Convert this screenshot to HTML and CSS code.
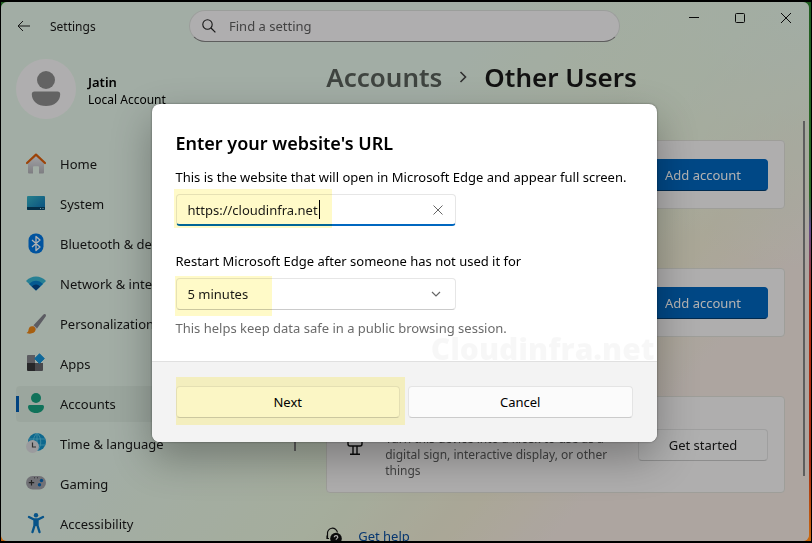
FILE: index.html
```html
<!DOCTYPE html>
<html lang="en">
<head>
    <meta charset="UTF-8">
    <meta name="viewport" content="width=device-width, initial-scale=1.0">
    <title>Settings</title>
    <link rel="stylesheet" href="styles.css">
</head>
<body>

    <div class="window">

        <!-- Title bar -->
        <header class="titlebar">
            <button class="back" aria-label="Back">
                <svg width="14" height="12" viewBox="0 0 14 12"><path d="M13 6H1M6 1L1 6l5 5" fill="none" stroke="#222" stroke-width="1"/></svg>
            </button>
            <span class="app-name">Settings</span>
            <div class="search">
                <svg width="14" height="14" viewBox="0 0 14 14"><circle cx="5.5" cy="5.5" r="4.7" fill="none" stroke="#222" stroke-width="1.1"/><path d="M9 9l4.400 4.400" stroke="#222" stroke-width="1.2"/></svg>
                <input type="text" placeholder="Find a setting" aria-label="Find a setting">
            </div>
            <div class="window-controls">
                <button aria-label="Minimize"><svg width="10" height="10" viewBox="0 0 10 10"><path d="M0 4.500h10" stroke="#111"/></svg></button>
                <button aria-label="Maximize"><svg width="10" height="10" viewBox="0 0 10 10"><rect x=".5" y=".5" width="9" height="9" rx="1" fill="none" stroke="#111"/></svg></button>
                <button aria-label="Close"><svg width="10" height="10" viewBox="0 0 10 10"><path d="M0 0l10 10M10 0L0 10" stroke="#111"/></svg></button>
            </div>
        </header>

        <div class="content">

            <!-- Left navigation -->
            <aside class="sidebar">
                <div class="profile">
                    <svg class="avatar" width="60" height="60" viewBox="0 0 60 60">
                        <circle cx="30" cy="30" r="30" fill="#fbfafb"/>
                        <circle cx="30" cy="21" r="9" fill="#8f8f8f"/>
                        <path d="M18.500 32.500h23a2.700 2.700 0 0 1 2.700 2.700c0 7-6 11.800-14.200 11.800s-14.200-4.800-14.200-11.800a2.700 2.700 0 0 1 2.700-2.700z" fill="#8f8f8f"/>
                    </svg>
                    <div>
                        <div class="profile-name">Jatin</div>
                        <div class="profile-type">Local Account</div>
                    </div>
                </div>
                <nav class="menu">
                    <a href="#">
                        <svg width="20" height="20" viewBox="0 0 20 20">
                            <defs><linearGradient id="wall" x2="0" y2="1"><stop offset="0" stop-color="#e8e8ec"/><stop offset="1" stop-color="#b4b4ba"/></linearGradient></defs>
                            <path d="M2 9l8-7 8 7v9.500a1 1 0 0 1-1 1h-4V13a.8.8 0 0 0-.8-.8H7.800a.8.8 0 0 0-.8.8v6.500H3a1 1 0 0 1-1-1z" fill="url(#wall)"/>
                            <path d="M1 9l9-8.400L19 9" fill="none" stroke="#e0610c" stroke-width="2.200" stroke-linecap="round" stroke-linejoin="round"/>
                        </svg>
                        Home
                    </a>
                    <a href="#">
                        <svg width="20" height="20" viewBox="0 0 20 20">
                            <defs><linearGradient id="screen" x2="1" y2="1"><stop offset="0" stop-color="#38b8c8"/><stop offset="1" stop-color="#0a70b8"/></linearGradient></defs>
                            <rect x="1" y="2" width="18" height="14" rx="1" fill="url(#screen)"/>
                            <path d="M1 13h18v2a1 1 0 0 1-1 1H2a1 1 0 0 1-1-1z" fill="#064468"/>
                            <path d="M14 14.500h1M16.500 14.500h1" stroke="#a5d8ec"/>
                        </svg>
                        System
                    </a>
                    <a href="#">
                        <svg width="20" height="20" viewBox="0 0 20 20">
                            <rect x="2.500" y="-.5" width="15" height="20" rx="7" fill="#0078e4"/>
                            <path d="M6 6l8 7-4 3.500v-14L14 6l-8 7" fill="none" stroke="#fff" stroke-width="1.300" stroke-linejoin="round"/>
                        </svg>
                        Bluetooth &amp; devices
                    </a>
                    <a href="#">
                        <svg width="20" height="20" viewBox="0 0 20 20">
                            <path d="M0 7C5 1 15 1 20 7L10 16.500z" fill="#38b8d4"/>
                            <path d="M3 10c4-4.500 10-4.500 14 0l-7 6.500z" fill="#0882d0"/>
                            <path d="M5.800 12.600c2.500-2.700 6-2.700 8.400 0L10 16.500z" fill="#064a90"/>
                        </svg>
                        Network &amp; internet
                    </a>
                    <a href="#">
                        <svg width="20" height="20" viewBox="0 0 20 20">
                            <path d="M19.600.4c.7.8.3 1.700-.3 2.600L11 14.500l-3.500-3.200L17 .9c.9-.8 1.800-1.200 2.600-.5z" fill="#85858e"/>
                            <path d="M7.500 11.300l3.500 3.200-1.500 1.700-3.300-3.500z" fill="#d0d0d6"/>
                            <path d="M5.800 12.300c2.500-.2 4.300 2 3.700 4-.8 3-5 4.200-9 2.700 2.200-.9 1.800-2.400 2.200-3.900.4-1.700 1.500-2.600 3.100-2.800z" fill="#f08818"/>
                        </svg>
                        Personalization
                    </a>
                    <a href="#">
                        <svg width="20" height="20" viewBox="0 0 20 20">
                            <path d="M2 1h7v8H1V2a1 1 0 0 1 1-1z" fill="#85858c"/>
                            <path d="M1 9h8v8H2a1 1 0 0 1-1-1z" fill="#38383c"/>
                            <path d="M9 9h8v7a1 1 0 0 1-1 1H9z" fill="#68686e"/>
                            <path d="M13.500-.2l4.800 4.800-4.800 4.800-4.800-4.800z" fill="#1695dc" stroke="#1695dc" stroke-linejoin="round"/>
                        </svg>
                        Apps
                    </a>
                    <a href="#" class="active">
                        <svg width="20" height="20" viewBox="0 0 20 20">
                            <circle cx="10" cy="4" r="5" fill="#17a482"/>
                            <path d="M3.500 11h13a1.500 1.500 0 0 1 1.500 1.500c0 4-3.500 6.500-8 6.500s-8-2.500-8-6.500A1.500 1.500 0 0 1 3.500 11z" fill="#17a482"/>
                        </svg>
                        Accounts
                    </a>
                    <a href="#">
                        <svg width="20" height="20" viewBox="0 0 20 20">
                            <circle cx="11" cy="8" r="9" fill="#1495cc"/>
                            <path d="M3 5h16M3 11h16M11-1v18M11-1c-5 5-5 13 0 18M11-1c5 5 5 13 0 18" fill="none" stroke="#68d0ec" stroke-width=".8"/>
                            <circle cx="6.500" cy="12.500" r="6.500" fill="#dedee2"/>
                            <path d="M6.500 8.500v4.500H10" fill="none" stroke="#444" stroke-width="1.200"/>
                        </svg>
                        Time &amp; language
                    </a>
                    <a href="#">
                        <svg width="20" height="20" viewBox="0 0 20 20">
                            <rect y="2" width="20" height="13.500" rx="6.700" fill="#a2a2aa"/>
                            <path d="M5.500 6v5.400M2.800 8.700h5.400" stroke="#333" stroke-width="1.200"/>
                            <circle cx="15.500" cy="6.500" r="1.700" fill="#0869b8"/>
                            <circle cx="13.500" cy="10.800" r="1.700" fill="#0869b8"/>
                            <path d="M8 3.800h1M11 3.800h1" stroke="#444"/>
                        </svg>
                        Gaming
                    </a>
                    <a href="#">
                        <svg width="20" height="20" viewBox="0 0 20 20">
                            <circle cx="10" cy="1.200" r="2.200" fill="#0b78c4"/>
                            <path d="M3 3l5 2.500h4L17 3M8.500 5.500v6L6.500 18M11.500 5.500v6l2 6.500" fill="none" stroke="#0b78c4" stroke-width="2.400" stroke-linecap="round" stroke-linejoin="round"/>
                            <path d="M8 5h4v7H8z" fill="#0b78c4"/>
                        </svg>
                        Accessibility
                    </a>
                </nav>
            </aside>

            <!-- Other users page -->
            <main class="page">
                <h1 class="breadcrumb">
                    <a href="#">Accounts</a>
                    <svg width="8" height="12" viewBox="0 0 8 12"><path d="M1.500 1l5 5-5 5" fill="none" stroke="#444" stroke-width="1.600"/></svg>
                    <span>Other Users</span>
                </h1>
                <section class="card">
                    <button class="btn primary">Add account</button>
                </section>
                <section class="card">
                    <button class="btn primary">Add account</button>
                </section>
                <section class="card kiosk">
                    <svg width="18" height="20" viewBox="0 0 18 20"><path d="M2 1h14v8a2 2 0 0 1-2 2H4a2 2 0 0 1-2-2zM7 11v8.500M11 11v8.500M4 19.300h10" fill="none" stroke="#111" stroke-width="1.400"/></svg>
                    <p>Turn this device into a kiosk to use as a digital sign, interactive display, or other things</p>
                    <button class="btn">Get started</button>
                </section>
                <div class="help">
                    <svg width="18" height="18" viewBox="0 0 18 18">
                        <path d="M1.500 11V7a5 5 0 0 1 10-1.500M1 8.500v3h2" fill="none" stroke="#111" stroke-width="1.200"/>
                        <circle cx="10" cy="11.500" r="5.800" fill="#111"/>
                        <path d="M8.300 10.200c0-2.300 3.500-2.100 3.500 0 0 1.200-1.700 1.200-1.700 2.600M10.100 14v1.200" fill="none" stroke="#fff" stroke-width="1.200"/>
                    </svg>
                    <a href="#">Get help</a>
                </div>
            </main>
        </div>

        <div class="scrollbar"></div>
        <div class="scrollbar-nav"></div>

        <!-- Kiosk setup dialog -->
        <div class="overlay">
            <form class="dialog" role="dialog" aria-labelledby="dialogTitle">
                <div class="dialog-body">
                    <h2 id="dialogTitle">Enter your website's URL</h2>
                    <label for="siteUrl">This is the website that will open in Microsoft Edge and appear full screen.</label>
                    <div class="field">
                        <input type="text" id="siteUrl" value="https://cloudinfra.net">
                        <span class="caret"></span>
                        <button type="button" class="clear" aria-label="Clear">
                            <svg width="10" height="10" viewBox="0 0 10 10"><path d="M.5.5l9 9M9.500.5l-9 9" stroke="#666"/></svg>
                        </button>
                        <span class="mark mark-url"></span>
                    </div>
                    <label for="restart" class="restart-label">Restart Microsoft Edge after someone has not used it for</label>
                    <div class="field">
                        <select id="restart">
                            <option>5 minutes</option>
                        </select>
                        <svg class="chevron" width="10" height="6" viewBox="0 0 10 6"><path d="M1 1l4 4 4-4" fill="none" stroke="#666" stroke-width="1.200"/></svg>
                        <span class="mark mark-time"></span>
                    </div>
                    <p class="hint">This helps keep data safe in a public browsing session.</p>
                </div>
                <div class="dialog-footer">
                    <div class="next">
                        <button type="button" class="btn">Next</button>
                        <span class="mark mark-next"></span>
                    </div>
                    <button type="button" class="btn">Cancel</button>
                </div>
                <span class="watermark">Cloudinfra.net</span>
            </form>
        </div>
    </div>

</body>
</html>
```

FILE: styles.css
```css
* {
    box-sizing: border-box;
}

body {
    margin: 0;
    height: 100vh;
    padding: 2px 3px 2px 1px;
    overflow: hidden;
    background: linear-gradient(#1f5c20, #2c6a24 36%, #5f4a88 42%, #b03010 55%, #a32a10 85%, #c86a10);
    font-family: "Noto Sans", "Open Sans", sans-serif;
    font-size: 13px;
    line-height: 20px;
    color: #1a1a1a;
    box-shadow: inset 1px 2px #000, inset -1px -2px #000;
}

button,
input,
select {
    font: inherit;
    color: inherit;
}

a {
    color: inherit;
    text-decoration: none;
}

.window {
    position: relative;
    display: flex;
    flex-direction: column;
    height: 100%;
    overflow: hidden;
    border-radius: 6px;
    background:
        radial-gradient(ellipse 30% 50% at 100% 0, #e9f8ec, transparent),
        linear-gradient(131deg, #e9f8ec 40%, #ecf8e0 60%, #f4efd8 71%, #f8ede6 80%);
}

/* Title bar */
.titlebar {
    display: flex;
    align-items: flex-start;
    height: 48px;
    padding: 8px 0 0 16px;
    flex-shrink: 0;
}

.titlebar button {
    display: flex;
    padding: 0;
    border: none;
    background: none;
}

.titlebar .back {
    width: 33px;
    padding-top: 10px;
}

.app-name {
    flex: 0 0 139px;
    padding-top: 7px;
    font-size: 12px;
}

.search {
    display: flex;
    align-items: center;
    gap: 13px;
    flex: 1;
    height: 32px;
    padding: 0 12px;
    border: 1px solid #dfe3df;
    border-bottom-color: #868686;
    border-radius: 16px;
    background: #fbf9fb;
}

.search input {
    flex: 1;
    padding: 0;
    border: none;
    outline: none;
    background: none;
}

.search input::placeholder {
    color: #606060;
    opacity: 1;
}

.window-controls {
    display: flex;
    margin-left: 51px;
}

.titlebar .window-controls button {
    width: 46px;
    padding: 3px 18px;
}

/* Left navigation */
.content {
    display: flex;
    flex: 1;
    min-height: 0;
}

.sidebar {
    flex: 0 0 40%;
    padding: 9px 32px 0 15px;
}

.profile {
    display: flex;
    align-items: center;
    gap: 12px;
    margin-bottom: 27px;
}

.profile-name {
    padding-top: 4px;
    font-weight: 600;
    line-height: 18px;
    color: #000;
}

.profile-type {
    font-size: 12px;
    line-height: 18px;
    color: #000;
}

.menu {
    display: flex;
    flex-direction: column;
    gap: 4px;
}

.menu a {
    display: flex;
    align-items: center;
    gap: 14px;
    height: 36px;
    padding-left: 10px;
    border-radius: 4px;
    white-space: nowrap;
}

.menu svg {
    overflow: visible;
}

.menu .active {
    background: linear-gradient(#005fb8, #005fb8) 0 50% / 3px 16px no-repeat rgba(0, 0, 0, 0.04);
}

/* Other users page */
.page {
    flex: 1;
    padding: 0 24px 0 2px;
}

.breadcrumb {
    display: flex;
    align-items: center;
    gap: 17px;
    margin: 9px 0 45px;
    font-size: 26px;
    font-weight: 600;
    line-height: 36px;
}

.breadcrumb a {
    color: #5b625c;
}

.card {
    display: flex;
    justify-content: flex-end;
    align-items: center;
    height: 69px;
    margin-bottom: 59px;
    padding: 0 16px;
    border: 1px solid #e2e2dc;
    border-radius: 4px;
    background: #fbfafa;
}

.btn {
    width: 130px;
    height: 32px;
    padding: 0;
    border: 1px solid #e4e4e4;
    border-bottom-color: #cbcbcb;
    border-radius: 4px;
    background: #fbfbfb;
}

.btn.primary {
    border-color: #0067c0;
    border-bottom-color: #003e73;
    background: #0067c0;
    color: #fff;
}

.kiosk {
    height: 97px;
    margin-bottom: 33px;
    padding-left: 19px;
}

.kiosk p {
    flex: 1;
    align-self: flex-end;
    margin: 0 16px 13px 21px;
    font-size: 12px;
    line-height: 16px;
    color: #606060;
}

.help {
    display: flex;
    align-items: center;
    gap: 14px;
}

.help a {
    color: #0b4fa0;
}

.scrollbar,
.scrollbar-nav {
    position: absolute;
    width: 2px;
    background: #868686;
}

.scrollbar {
    right: 4px;
    top: 22%;
    bottom: 12%;
}

.scrollbar-nav {
    left: 293px;
    top: 22%;
    bottom: 90px;
}

/* Kiosk setup dialog */
.overlay {
    position: absolute;
    inset: 0;
    display: flex;
    justify-content: center;
    align-items: center;
    padding: 3px 2px 0 0;
    background: rgba(0, 0, 0, 0.3);
}

.dialog {
    position: relative;
    max-width: 505px;
    width: 100%;
    overflow: hidden;
    border-radius: 8px;
    background: #fff;
    color: #000;
    box-shadow: 0 0 2px rgba(0, 0, 0, 0.5), 0 16px 40px rgba(0, 0, 0, 0.3);
}

.dialog-body {
    padding: 27px 24px 23px;
    border-bottom: 1px solid #e0e0e0;
}

.dialog h2 {
    margin: 0 0 12px;
    font-size: 18px;
    font-weight: 600;
    line-height: 24px;
}

.dialog label {
    display: block;
    margin-bottom: 7px;
    white-space: nowrap;
}

.dialog .restart-label {
    margin-top: 25px;
}

.field {
    position: relative;
    width: 280px;
    height: 32px;
}

.field input,
.field select {
    width: 100%;
    height: 32px;
    padding: 0 11px;
    border: 1px solid #e6e6e6;
    border-radius: 4px;
    outline: none;
    background: #fff;
    color: #1a1a1a;
    appearance: none;
}

.field input {
    border-bottom: 2px solid #0067c0;
}

.field select {
    border-bottom-color: #cbcbcb;
}

.caret {
    position: absolute;
    left: 143px;
    top: 6px;
    width: 1px;
    height: 19px;
    background: #000;
}

.clear {
    position: absolute;
    right: 13px;
    top: 11px;
    display: flex;
    padding: 0;
    border: none;
    background: none;
}

.chevron {
    position: absolute;
    right: 15px;
    top: 13px;
}

.hint {
    margin: 8px 0 0;
    color: #6b6b6b;
}

.dialog-footer {
    display: flex;
    gap: 8px;
    padding: 24px;
    background: #f3f3f3;
}

.dialog-footer > * {
    position: relative;
    flex: 1 1 50%;
}

.next .btn {
    width: 100%;
}

/* Highlighter marks */
.mark {
    position: absolute;
    background: #fffac8;
    mix-blend-mode: multiply;
    pointer-events: none;
}

.mark-url {
    inset: -5px 124px -2px -2px;
}

.mark-time {
    inset: -2px 184px -6px -1px;
}

.mark-next {
    inset: -9px -5px -7px 0;
}

.watermark {
    position: absolute;
    right: 2px;
    bottom: 75px;
    font-family: "Open Sans", sans-serif;
    font-size: 30px;
    font-weight: 800;
    line-height: 36px;
    color: rgba(0, 0, 0, 0.03);
}
```
